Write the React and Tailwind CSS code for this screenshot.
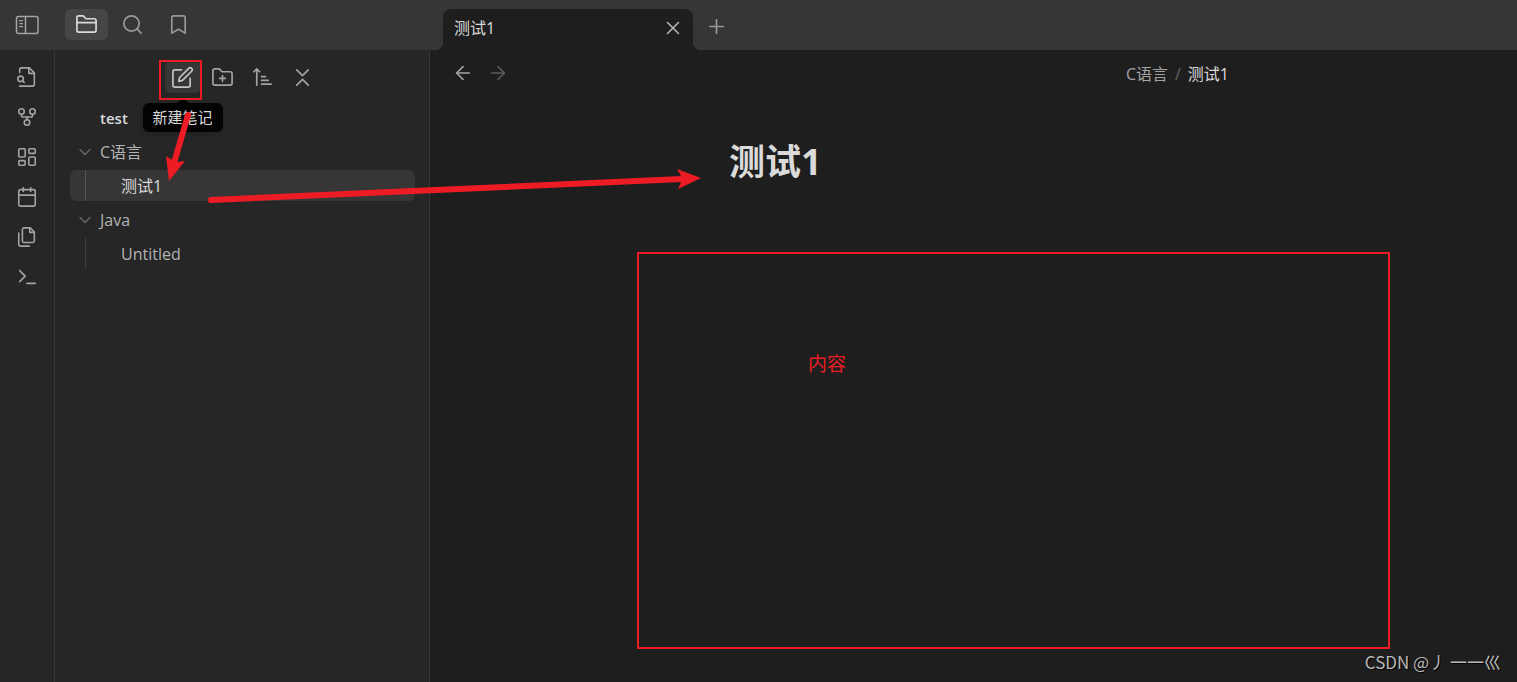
import React, { useState } from "react";
import {
  ArrowLeft,
  ArrowRight,
  Bookmark,
  ChevronDown,
  FolderClosed,
  FolderPlus,
  GitFork,
  LayoutDashboard,
  Plus,
  Search,
  X,
} from "lucide-react";

/** Base for the hand-drawn icons, same grid as lucide */
function Icon({ size = 22, children }) {
  return (
    <svg
      viewBox="0 0 24 24"
      width={size}
      height={size}
      fill="none"
      stroke="currentColor"
      strokeWidth="1.75"
      strokeLinecap="round"
      strokeLinejoin="round"
      aria-hidden="true"
    >
      {children}
    </svg>
  );
}

function SidebarIcon() {
  return (
    <svg viewBox="0 0 24 20" width="24" height="20" fill="none" stroke="currentColor" strokeWidth="1.5" aria-hidden="true">
      <rect x="1.5" y="1.5" width="21.5" height="17" rx="2" />
      <path d="M10.5 1.5v17" />
      <path d="M4 5.5h4M4.5 8.5H8M4 11.5h4" strokeWidth="1.25" />
    </svg>
  );
}

function QuickSwitchIcon() {
  return (
    <Icon>
      <path d="M4 22h14a2 2 0 0 0 2-2V7.5L14.5 2H6a2 2 0 0 0-2 2v3" />
      <path d="M14 2v6h6" />
      <circle cx="5" cy="14" r="3" />
      <path d="m9 18-1.8-1.8" />
    </Icon>
  );
}

function CalendarIcon() {
  return (
    <Icon>
      <rect x="3" y="4" width="18" height="18" rx="2" />
      <path d="M16 2v4M8 2v4M3 10h18" />
    </Icon>
  );
}

function FilesIcon() {
  return (
    <Icon>
      <path d="M15.5 2H8.6c-.4 0-.8.2-1.1.5-.3.3-.5.7-.5 1.1v12.8c0 .4.2.8.5 1.1.3.3.7.5 1.1.5h9.8c.4 0 .8-.2 1.1-.5.3-.3.5-.7.5-1.1V6.5L15.5 2z" />
      <path d="M3 7.6v12.8c0 .4.2.8.5 1.1.3.3.7.5 1.1.5h9.8" />
      <path d="M15 2v5h5" />
    </Icon>
  );
}

function PromptIcon() {
  return (
    <Icon>
      <path d="m4 17 6-6-6-6" />
      <path d="M12 19h9" />
    </Icon>
  );
}

function NewNoteIcon() {
  return (
    <Icon size={23}>
      <path d="M11 4H4a2 2 0 0 0-2 2v14a2 2 0 0 0 2 2h14a2 2 0 0 0 2-2v-7" />
      <path d="M18.5 2.5a2.12 2.12 0 0 1 3 3L12 15l-4 1 1-4Z" />
    </Icon>
  );
}

function SortIcon() {
  return (
    <Icon size={23}>
      <path d="M11 11h4M11 15h7M11 19h10" />
      <path d="m9 6-3-3-3 3M6 3v17" />
    </Icon>
  );
}

function CollapseIcon() {
  return (
    <Icon size={23}>
      <path d="m6 20 6-6 6 6M6 4l6 6 6-6" />
    </Icon>
  );
}

const RIBBON = [
  { label: "打开快速切换", icon: <QuickSwitchIcon /> },
  { label: "查看关系图谱", icon: <GitFork size={22} strokeWidth={1.75} /> },
  { label: "新建白板", icon: <LayoutDashboard size={22} strokeWidth={1.75} /> },
  { label: "打开今日日记", icon: <CalendarIcon /> },
  { label: "插入模板", icon: <FilesIcon /> },
  { label: "打开命令面板", icon: <PromptIcon /> },
];

const PANELS = [
  { id: "files", label: "文件列表", icon: <FolderClosed size={23} strokeWidth={1.75} /> },
  { id: "search", label: "搜索", icon: <Search size={23} strokeWidth={1.75} /> },
  { id: "bookmarks", label: "书签", icon: <Bookmark size={23} strokeWidth={1.75} /> },
];

const TREE = [
  { name: "C语言", notes: ["测试1"] },
  { name: "Java", notes: ["Untitled"] },
];

function TitleBar({ panel, onPanel }) {
  return (
    <header className="flex h-[50px] bg-[#363636] text-[#a3a3a3]">
      <div className="flex w-[430px] shrink-0 items-start pt-[9px]">
        <button type="button" aria-label="收起侧边栏" className="flex h-8 w-[54px] items-center justify-center">
          <SidebarIcon />
        </button>
        <div className="ml-[11px] flex gap-[3px]">
          {PANELS.map((p) => (
            <button
              key={p.id}
              type="button"
              aria-label={p.label}
              aria-pressed={panel === p.id}
              onClick={() => onPanel(p.id)}
              className={[
                "flex h-[31px] w-[43px] items-center justify-center rounded-md",
                panel === p.id ? "bg-[#464646] text-[#dadada]" : "text-[#999999]",
              ].join(" ")}
            >
              {p.icon}
            </button>
          ))}
        </div>
      </div>

      <div className="flex items-end pl-[13px]">
        <div className="relative flex h-[41px] w-[250px] items-center justify-between rounded-t-lg bg-[#1e1e1e] pr-[9px] pb-[3px] pl-[11px] text-[#dadada]">
          {/* Rounded feet of the tab */}
          <span className="absolute bottom-0 -left-2 h-2 w-2 bg-[radial-gradient(circle_at_0_0,#363636_8px,#1e1e1e_8px)]" />
          <span className="absolute -right-2 bottom-0 h-2 w-2 bg-[radial-gradient(circle_at_100%_0,#363636_8px,#1e1e1e_8px)]" />
          <span className="text-base">测试1</span>
          <button type="button" aria-label="关闭标签页" className="text-[#b3b3b3]">
            <X size={22} strokeWidth={1.75} />
          </button>
        </div>
        <button type="button" aria-label="新建标签页" className="mb-3 ml-3 text-[#999999]">
          <Plus size={23} strokeWidth={1.75} />
        </button>
      </div>
    </header>
  );
}

function Ribbon() {
  return (
    <nav className="flex w-[55px] shrink-0 flex-col items-center gap-2 border-r border-[#363636] pt-[11px] text-[#a3a3a3]">
      {RIBBON.map((r) => (
        <button key={r.label} type="button" aria-label={r.label} className="flex h-8 w-9 items-center justify-center">
          {r.icon}
        </button>
      ))}
    </nav>
  );
}

function ToolButton({ label, active, children }) {
  return (
    <button
      type="button"
      aria-label={label}
      className={[
        "flex h-8 w-9 items-center justify-center rounded-md",
        active ? "bg-[#363636] text-[#c4c4c4]" : "text-[#a3a3a3]",
      ].join(" ")}
    >
      {children}
    </button>
  );
}

function Explorer({ current, onOpen }) {
  return (
    <aside className="w-[375px] shrink-0 border-r border-[#363636] pt-[11px] pr-[14px] pl-[15px] text-[#b3b3b3]">
      <div className="flex justify-center gap-1 px-[10px]">
        <div className="relative">
          <ToolButton label="新建笔记" active>
            <NewNoteIcon />
          </ToolButton>
          <div
            role="tooltip"
            className="absolute top-[42px] left-1/2 -translate-x-1/2 rounded-md bg-[#040404] px-[10px] py-1 text-[15px] leading-[21px] whitespace-nowrap text-[#dadada] shadow-md"
          >
            <span className="absolute -top-[5px] left-1/2 -translate-x-1/2 border-x-[6px] border-b-[5px] border-x-transparent border-b-[#040404]" />
            新建笔记
          </div>
          <div className="absolute -top-[1px] -left-[6px] h-10 w-[43px] border-2 border-[#ed1c24]" />
        </div>
        <ToolButton label="新建文件夹">
          <FolderPlus size={23} strokeWidth={1.75} />
        </ToolButton>
        <ToolButton label="排序">
          <SortIcon />
        </ToolButton>
        <ToolButton label="全部折叠">
          <CollapseIcon />
        </ToolButton>
      </div>

      <div className="mt-[10px] flex h-[31px] items-center pl-[30px] text-[15px] font-semibold text-[#dadada]">test</div>

      <ul className="mt-[2px] flex flex-col gap-[3px]">
        {TREE.map((folder) => (
          <li key={folder.name}>
            <button type="button" aria-expanded="true" className="flex h-[31px] w-full items-center pl-[5px] text-left">
              <ChevronDown size={20} strokeWidth={1.75} className="mr-[5px] text-[#666666]" />
              {folder.name}
            </button>
            <ul className="mt-[3px]">
              {folder.notes.map((note) => (
                <li key={note}>
                  <button
                    type="button"
                    onClick={() => onOpen(note)}
                    className={[
                      "flex h-[31px] w-full items-center rounded-md pl-[15px] text-left",
                      note === current ? "bg-[#363636] text-[#dadada]" : "",
                    ].join(" ")}
                  >
                    <span
                      className={[
                        "flex h-full items-center border-l pl-[35px]",
                        note === current ? "border-[#555555]" : "border-[#3f3f3f]",
                      ].join(" ")}
                    >
                      {note}
                    </span>
                  </button>
                </li>
              ))}
            </ul>
          </li>
        ))}
      </ul>
    </aside>
  );
}

function Editor() {
  return (
    <main className="flex min-w-0 flex-1 flex-col bg-[#1e1e1e]">
      <div className="flex h-[46px] items-center justify-between pr-[288px] pl-[22px]">
        <div className="flex gap-[13px] text-[#a3a3a3]">
          <button type="button" aria-label="后退">
            <ArrowLeft size={22} strokeWidth={1.75} />
          </button>
          <button type="button" aria-label="前进" disabled className="text-[#5a5a5a]">
            <ArrowRight size={22} strokeWidth={1.75} />
          </button>
        </div>
        <nav aria-label="路径" className="flex gap-[7px] pt-[2px] text-base whitespace-nowrap text-[#a3a3a3]">
          <button type="button">C语言</button>
          <span className="text-[#666666]">/</span>
          <span className="text-[#dadada]">测试1</span>
        </nav>
      </div>

      <h1 className="mt-[41px] pl-[299px] text-[36px] leading-[50px] font-bold text-[#dadada]">测试1</h1>

      <section className="mt-[65px] mr-[127px] mb-[33px] ml-[207px] flex-1 border-2 border-[#ed1c24] pt-24 pl-[169px]">
        <p className="text-[19px] leading-[28px] text-[#ed1c24]">内容</p>
      </section>
    </main>
  );
}

/** Red arrows drawn over the window */
function Arrows() {
  return (
    <svg className="pointer-events-none absolute top-0 left-0" width="720" height="220" fill="#ed1c24" aria-hidden="true">
      <path d="M188 115 174 163" stroke="#ed1c24" strokeWidth="6" strokeLinecap="round" />
      <path d="m169 181-3-25 6 4 5 2 8-1Z" />
      <path d="M211 200 682 179" stroke="#ed1c24" strokeWidth="6" strokeLinecap="round" />
      <path d="m701 178-24-9 4 7v6l-3 7Z" />
    </svg>
  );
}

export default function App() {
  const [panel, setPanel] = useState("files");
  const [current, setCurrent] = useState("测试1");

  return (
    <div className="relative flex min-h-screen flex-col bg-[#262626] font-['Open_Sans','Noto_Sans_CJK_SC',sans-serif] text-base">
      <TitleBar panel={panel} onPanel={setPanel} />
      <div className="flex flex-1">
        <Ribbon />
        <Explorer current={current} onOpen={setCurrent} />
        <Editor />
      </div>
      <Arrows />
      <div className="absolute right-4 bottom-2 font-['Noto_Sans_CJK_SC',sans-serif] text-[17px] leading-6 whitespace-nowrap text-[#b8b8b8] [text-shadow:1px_1px_1px_#000]">
        CSDN @丿 一一巛
      </div>
    </div>
  );
}
